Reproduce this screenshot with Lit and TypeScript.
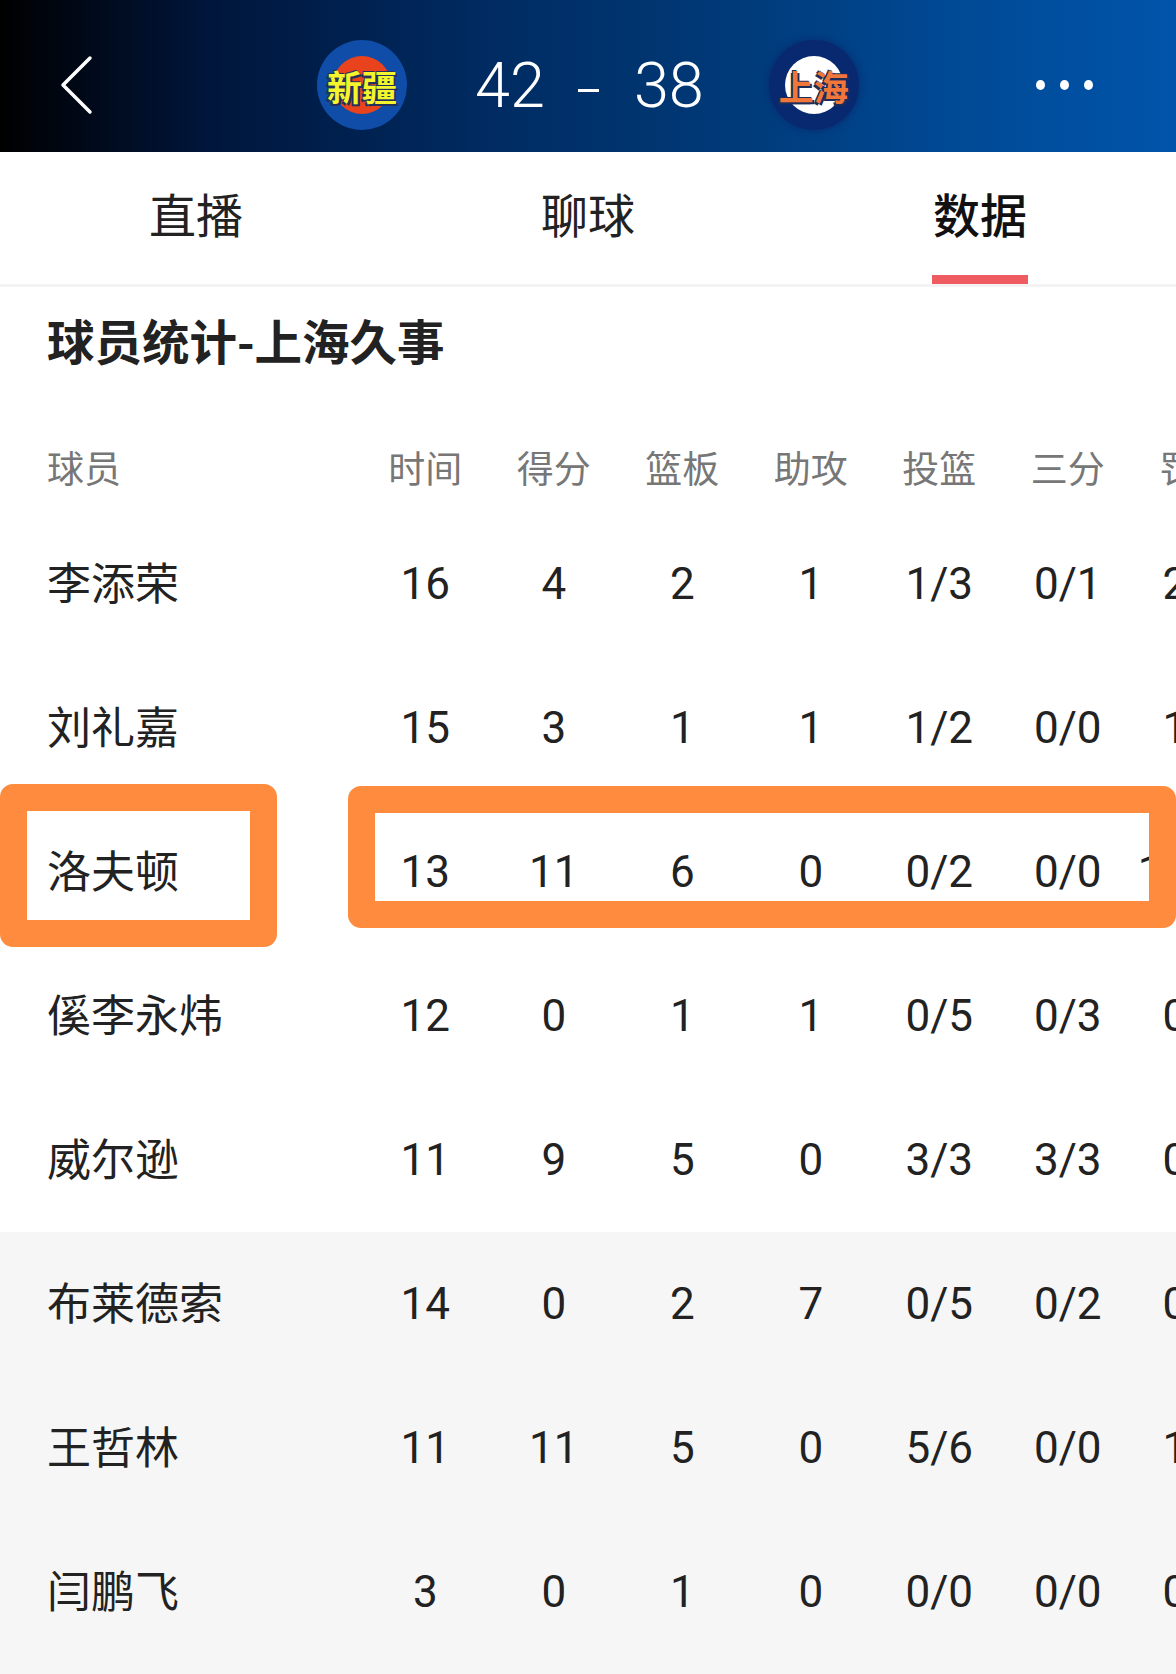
import { LitElement, html, css } from "lit";
import { customElement } from "lit/decorators.js";

const HEADS = ["时间", "得分", "篮板", "助攻", "投篮", "三分", "罚球"];
const TOP = [
  ["李添荣", "16", "4", "2", "1", "1/3", "0/1", "2/2"],
  ["刘礼嘉", "15", "3", "1", "1", "1/2", "0/0", "1/1"],
  ["洛夫顿", "13", "11", "6", "0", "0/2", "0/0", "11/12"],
  ["傒李永炜", "12", "0", "1", "1", "0/5", "0/3", "0/0"],
  ["威尔逊", "11", "9", "5", "0", "3/3", "3/3", "0/0"],
];
const BENCH = [
  ["布莱德索", "14", "0", "2", "7", "0/5", "0/2", "0/0"],
  ["王哲林", "11", "11", "5", "0", "5/6", "0/0", "1/2"],
  ["闫鹏飞", "3", "0", "1", "0", "0/0", "0/0", "0/0"],
];

@customElement("app-root")
export class AppRoot extends LitElement {
  static styles = css`
    :host {
      display: block;
      width: 1176px;
      height: 1674px;
      overflow: hidden;
      position: relative;
      background: #fff;
      font-family: "Noto Sans CJK SC", "Noto Sans", sans-serif;
      color: #222;
    }
    .hero {
      height: 152px;
      box-sizing: border-box;
      padding-top: 18px;
      display: flex;
      align-items: center;
      background: linear-gradient(90deg, #000 0%, #00163c 18%, #002a60 40%, #003a78 62%, #004a96 82%, #0054aa 100%);
      color: #fff;
    }
    .back { margin-left: 59px; width: 36px; height: 60px; flex: none; }
    .logo {
      width: 90px;
      height: 90px;
      border-radius: 50%;
      display: flex;
      align-items: center;
      justify-content: center;
      flex: none;
      position: relative;
    }
    .logo::before {
      content: "";
      position: absolute;
      width: 58px;
      height: 58px;
      border-radius: 50%;
      left: 16px;
      top: 16px;
    }
    .logo span {
      position: relative;
      font-size: 35px;
      line-height: 1;
      font-weight: 700;
      white-space: nowrap;
    }
    .xj { margin-left: 222px; background: #0f4da8; }
    .xj::before { background: #e8431c; }
    .xj span {
      color: #f4f52c;
      text-shadow: -2px 2px 0 #23305c, 2px 2px 0 #23305c, -1px -1px 0 #23305c;
    }
    .sh { margin-left: 65px; background: #08296f; box-shadow: 0 0 8px #08296f; }
    .sh::before { background: #fff; }
    .sh span {
      color: #f0763a;
      text-shadow: -2px 2px 0 #1c2d5a, 2px 2px 0 #1c2d5a, -1px -1px 0 #1c2d5a;
    }
    .score {
      margin-left: 68px;
      display: flex;
      align-items: center;
      font-family: Roboto, sans-serif;
      font-weight: 300;
      font-size: 63px;
      line-height: 1;
      flex: none;
    }
    .dash { width: 21px; height: 3px; background: #fff; margin: 10px 35px 0 33px; }
    .dots { margin-left: 177px; display: flex; gap: 15px; }
    .dots i { width: 9px; height: 10px; border-radius: 50%; background: #fff; display: block; }

    .tabs {
      height: 132px;
      display: grid;
      grid-template-columns: 1fr 1fr 1fr;
      border-bottom: 3px solid #f3f3f3;
      box-sizing: content-box;
    }
    .tab {
      font-size: 47px;
      line-height: 46px;
      padding-top: 38px;
      text-align: center;
      position: relative;
      color: #222;
    }
    .tab.on { font-weight: 500; color: #111; }
    .tab.on::after {
      content: "";
      position: absolute;
      left: 50%;
      margin-left: -48px;
      width: 96px;
      height: 9px;
      bottom: 0;
      background: #ee5b60;
    }
    .title {
      font-size: 47.5px;
      font-weight: 700;
      line-height: 106px;
      padding-bottom: 4px;
      padding-left: 47px;
      color: #222;
      white-space: nowrap;
    }
    .table-wrap { position: relative; display: flow-root; }
    .row { display: flex; align-items: center; height: 144px; white-space: nowrap; }
    .row.head { height: 86px; margin-top: 29px; color: #777; font-size: 37px; }
    .name {
      width: 361px;
      flex: none;
      padding-left: 47px;
      padding-bottom: 6px;
      box-sizing: border-box;
      font-size: 44px;
    }
    .head .name { font-size: 37px; padding-bottom: 4px; }
    .cell {
      width: 128.5px;
      flex: none;
      display: flex;
      justify-content: center;
      padding-bottom: 1px;
      font-family: Roboto, sans-serif;
      font-size: 44px;
    }
    .head .cell { font-family: "Noto Sans CJK SC", sans-serif; font-size: 37px; padding-bottom: 4px; }
    .bench { background: #f6f6f6; padding-bottom: 20px; }
    .mark {
      position: absolute;
      box-sizing: border-box;
      border: 27px solid #ff8c3e;
      border-radius: 13px;
    }
    .mark.a { left: 0; top: 387px; width: 277px; height: 163px; }
    .mark.b { left: 348px; top: 389px; width: 828px; height: 142px; }
  `;

  private row(r: string[]) {
    return html`<div class="row">
      <div class="name">${r[0]}</div>
      ${r.slice(1).map((v) => html`<div class="cell">${v}</div>`)}
    </div>`;
  }

  render() {
    return html`
      <div class="hero">
        <svg class="back" viewBox="0 0 36 60" fill="none" stroke="#fff" stroke-width="3.5" stroke-linecap="round" stroke-linejoin="round">
          <path d="M31 3 L4 30 L31 57" />
        </svg>
        <div class="logo xj"><span>新疆</span></div>
        <div class="score"><span>42</span><span class="dash"></span><span>38</span></div>
        <div class="logo sh"><span>上海</span></div>
        <div class="dots"><i></i><i></i><i></i></div>
      </div>
      <div class="tabs">
        <div class="tab">直播</div>
        <div class="tab">聊球</div>
        <div class="tab on">数据</div>
      </div>
      <div class="title">球员统计-上海久事</div>
      <div class="table-wrap">
        <div class="row head">
          <div class="name">球员</div>
          ${HEADS.map((h) => html`<div class="cell">${h}</div>`)}
        </div>
        ${TOP.map((r) => this.row(r))}
        <div class="bench">${BENCH.map((r) => this.row(r))}</div>
        <div class="mark a"></div>
        <div class="mark b"></div>
      </div>
    `;
  }
}
